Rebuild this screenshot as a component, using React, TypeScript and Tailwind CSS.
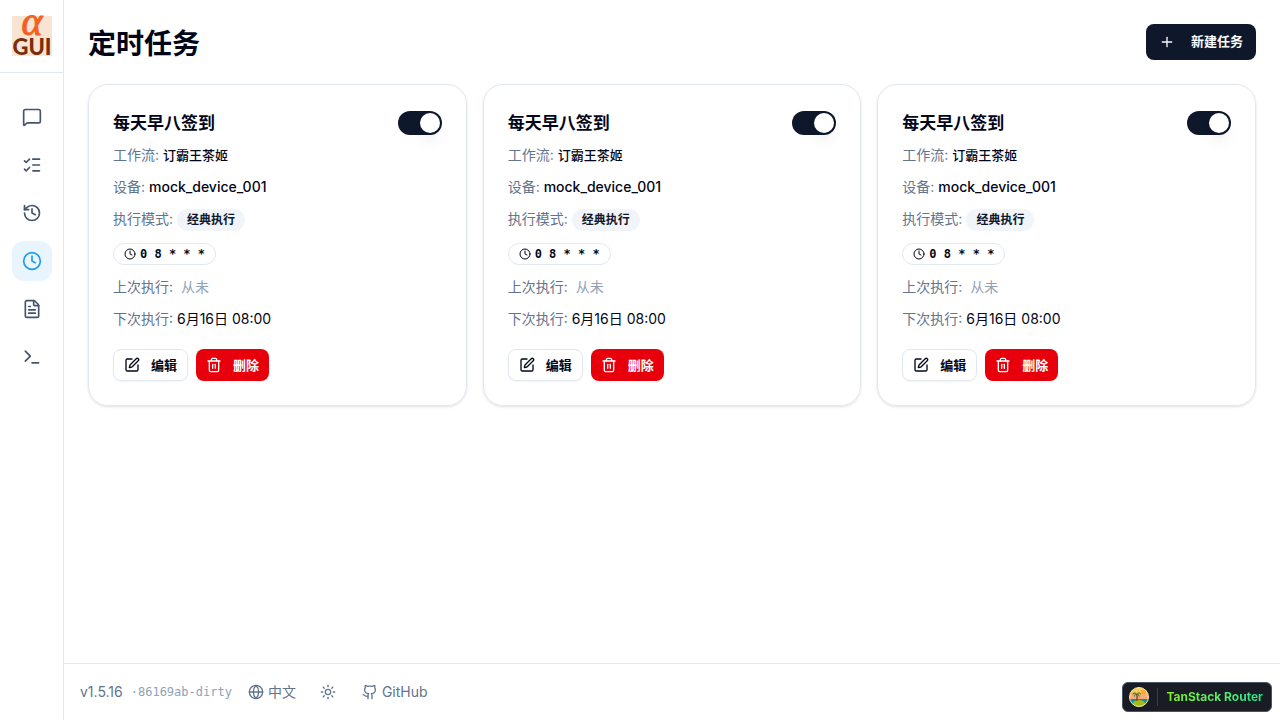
import { useState } from 'react';
import {
    Clock,
    FileText,
    Github,
    Globe,
    History,
    ListChecks,
    MessageSquare,
    Plus,
    SquarePen,
    Sun,
    Terminal,
    Trash2,
} from 'lucide-react';

const navItems = [
    { id: 'chat', label: '对话', icon: MessageSquare },
    { id: 'workflows', label: '工作流', icon: ListChecks },
    { id: 'history', label: '历史记录', icon: History },
    { id: 'scheduled', label: '定时任务', icon: Clock },
    { id: 'logs', label: '日志', icon: FileText },
    { id: 'terminal', label: '终端', icon: Terminal },
];

interface Task {
    id: number;
    name: string;
    workflow: string;
    device: string;
    mode: string;
    cron: string;
    lastRun: string | null;
    nextRun: string;
}

const initialTasks: Task[] = [1, 2, 3].map(id => ({
    id,
    name: '每天早八签到',
    workflow: '订霸王茶姬',
    device: 'mock_device_001',
    mode: '经典执行',
    cron: '0 8 * * *',
    lastRun: null,
    nextRun: '6月16日 08:00',
}));

const Logo = () => (
    <svg viewBox="0 0 40 40" className="size-10 overflow-visible" role="img" aria-label="AutoGLM GUI">
        <rect width="40" height="40" fill="#f8e4d2" />
        <text x="20" y="19" textAnchor="middle" fontFamily="Liberation Serif, serif" fontSize="40" fontStyle="italic" fill="#f4601f" stroke="#f4601f">α</text>
        <text x="20" y="39" textAnchor="middle" fontFamily="Lato, sans-serif" fontSize="22" fontWeight="900" fill="#7c2d0c">GUI</text>
    </svg>
);

const Sidebar = () => {
    const [active, setActive] = useState('scheduled');

    return (
        <aside className="flex w-16 shrink-0 flex-col border-r border-slate-200">
            <div className="flex justify-center border-b border-slate-200 py-4">
                <Logo />
            </div>
            <nav className="flex flex-col items-center gap-2 py-6">
                {navItems.map(({ id, label, icon: Icon }) => (
                    <button
                        key={id}
                        aria-label={label}
                        onClick={() => setActive(id)}
                        className={`flex size-10 items-center justify-center rounded-xl ${active === id ? 'bg-[#e8f5fe] text-[#1d9bf0]' : 'text-slate-600'}`}
                    >
                        <Icon size={20} />
                    </button>
                ))}
            </nav>
        </aside>
    );
};

const TaskCard = ({ task }: { task: Task }) => {
    const [enabled, setEnabled] = useState(true);

    return (
        <article className="flex flex-col gap-3 rounded-[20px] border border-slate-200 p-6 text-sm text-slate-500 shadow-sm">
            <div>
                <div className="mb-2 flex items-center justify-between">
                    <h2 className="text-[17px]/7 font-semibold text-slate-950">{task.name}</h2>
                    <button
                        role="switch"
                        aria-checked={enabled}
                        aria-label={task.name}
                        onClick={() => setEnabled(!enabled)}
                        className={`flex h-6 w-11 items-center rounded-full p-0.5 ${enabled ? 'justify-end bg-slate-900' : 'justify-start bg-slate-200'}`}
                    >
                        <span className="size-5 rounded-full bg-white shadow-lg" />
                    </button>
                </div>
                <p>工作流: <span className="text-[13px] font-medium text-slate-950">{task.workflow}</span></p>
            </div>
            <p>设备: <span className="font-medium text-slate-950">{task.device}</span></p>
            <div className="flex items-start gap-1">
                <span>执行模式:</span>
                <span className="rounded-full bg-slate-100 px-2.5 py-[3px] text-xs/4 font-semibold text-slate-900">{task.mode}</span>
            </div>
            <div className="flex">
                <span className="flex items-center gap-1 rounded-full border border-slate-200 px-2.5 py-0.5 text-slate-950">
                    <Clock size={12} />
                    <code className="font-['DejaVu_Sans_Mono',monospace] text-xs/4 font-semibold">{task.cron}</code>
                </span>
            </div>
            <p>上次执行: <span className="ml-1 text-slate-400">{task.lastRun ?? '从未'}</span></p>
            <p>下次执行: <span className="text-slate-950">{task.nextRun}</span></p>
            <div className="flex gap-2 pt-2">
                <button className="flex h-8 items-center gap-[11px] rounded-lg border border-slate-200 px-2.5 text-[13px] font-semibold text-slate-950 shadow-xs">
                    <SquarePen size={16} />
                    编辑
                </button>
                <button className="flex h-8 items-center gap-[11px] rounded-lg bg-[#e7000b] px-2.5 text-[13px] font-semibold text-white">
                    <Trash2 size={16} />
                    删除
                </button>
            </div>
        </article>
    );
};

const Footer = () => (
    <footer className="flex h-[57px] items-center border-t border-slate-200 px-4 text-sm text-slate-500">
        <span>v1.5.16</span>
        <span className="ml-2 font-['DejaVu_Sans_Mono',monospace] text-xs text-slate-400">·86169ab-dirty</span>
        <button className="ml-2 flex h-8 items-center gap-1 px-2">
            <Globe size={16} />
            中文
        </button>
        <button aria-label="切换主题" className="ml-2 flex size-8 items-center justify-center">
            <Sun size={16} />
        </button>
        <a href="https://github.com" className="ml-2.5 flex h-8 items-center gap-1 px-2">
            <Github size={16} />
            GitHub
        </a>
    </footer>
);

const RouterBadge = () => (
    <button className="fixed right-2 bottom-2 flex h-[30px] items-center gap-2 rounded-md border border-[#475467] bg-[#191c24] pr-2 pl-1.5 text-xs font-bold">
        <svg viewBox="0 0 20 20" className="size-5">
            <defs>
                <linearGradient id="sky" x1="0" y1="0" x2="0" y2="1">
                    <stop offset="0" stopColor="#f9d64a" />
                    <stop offset="0.65" stopColor="#f99d87" />
                </linearGradient>
                <clipPath id="disc"><circle cx="10" cy="10" r="9.5" /></clipPath>
            </defs>
            <g clipPath="url(#disc)">
                <rect width="20" height="20" fill="url(#sky)" />
                <circle cx="14.5" cy="5" r="2.5" fill="#fda831" />
                <path d="M0 12h20v8H0z" fill="#168d9c" />
                <ellipse cx="10" cy="17.5" rx="6.5" ry="4.5" fill="#a5bd12" />
                <path d="M7.6 7c.8 2.4.8 4.6.2 7" stroke="#6b4a21" strokeWidth="1.3" fill="none" />
                <path d="M7.5 6.8C5.6 4.4 3.8 5.6 3.3 8c1.2-1.2 2.4-1.5 4.2-1.2-2 .3-2.8 1.6-2.5 3.5.8-1.6 1.6-2.5 2.6-3.3 1.6.8 2.4 1.8 2.5 3.5.9-2 .3-3.2-1.8-3.8 1.7-.3 2.8.1 3.9 1.2-.2-2.5-2.3-3.6-4.7-1.1z" fill="#257a1d" />
            </g>
            <circle cx="10" cy="10" r="9.5" fill="none" stroke="#f4eda8" />
        </svg>
        <span className="h-[18px] w-px bg-[#344054]" />
        <span className="bg-gradient-to-r from-[#84f022] to-[#1de58b] bg-clip-text text-transparent">TanStack Router</span>
    </button>
);

export default function App() {
    return (
        <div className="flex min-h-screen bg-white font-[Inter,'Noto_Sans_CJK_SC',sans-serif] text-slate-950">
            <Sidebar />
            <div className="flex min-w-0 flex-1 flex-col">
                <main className="flex-1 p-6">
                    <header className="mb-5 flex h-10 items-start justify-between">
                        <h1 className="text-[28px]/10 font-bold">定时任务</h1>
                        <button className="flex h-9 items-center gap-4 rounded-lg bg-slate-900 px-[13px] text-[13px] font-semibold text-slate-50">
                            <Plus size={16} />
                            新建任务
                        </button>
                    </header>
                    <div className="grid grid-cols-1 gap-4 md:grid-cols-2 lg:grid-cols-3">
                        {initialTasks.map(task => <TaskCard key={task.id} task={task} />)}
                    </div>
                </main>
                <Footer />
            </div>
            <RouterBadge />
        </div>
    );
}
